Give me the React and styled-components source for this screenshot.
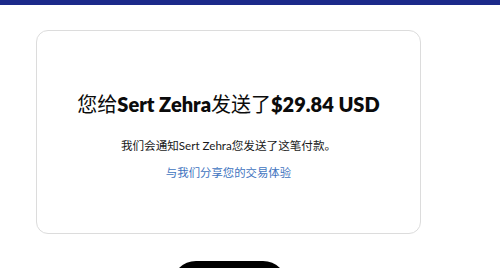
import React from 'react'
import styled, { createGlobalStyle } from 'styled-components'

const Global = createGlobalStyle`
  body {
    margin: 0;
    background: #ffffff;
    font-family: Lato, "Noto Sans CJK SC", sans-serif;
    color: #111;
  }
`

const TopBar = styled.div`
  height: 5px;
  background-color: #1c2a8a;
`

const Page = styled.main`
  padding: 25px 0 0 36px;
  display: flex;
  flex-direction: column;
  align-items: flex-start;
`

const Card = styled.section`
  box-sizing: border-box;
  width: 385px;
  height: 204px;
  border: 1px solid #dcdcdc;
  border-radius: 12px;
  padding-top: 60px;
  display: flex;
  flex-direction: column;
  align-items: center;
`

const Title = styled.h1`
  margin: 0;
  font-size: 20px;
  line-height: 26px;
  font-weight: 400;
  color: #0b0b0b;

  & > b {
    font-weight: 800;
  }
`

const Note = styled.p`
  margin: 21px 0 0;
  font-size: 11.6px;
  line-height: 15px;
  color: #1a1a1a;
`

const Link = styled.a`
  margin-top: 12px;
  font-size: 11.4px;
  line-height: 15px;
  color: #3f74c0;
  text-decoration: none;
  cursor: pointer;
`

const Button = styled.button`
  margin: 27px 0 0 136px;
  width: 115px;
  height: 62px;
  border: none;
  border-radius: 24px;
  background-color: #000;
  color: #fff;
  font-family: inherit;
  font-size: 15px;
  font-weight: 700;
`

export default function App() {
  return (
    <>
      <Global />
      <TopBar />
      <Page>
        <Card>
          <Title>
            您给<b>Sert Zehra</b>发送了<b>$29.84 USD</b>
          </Title>
          <Note>我们会通知Sert Zehra您发送了这笔付款。</Note>
          <Link>与我们分享您的交易体验</Link>
        </Card>
        <Button />
      </Page>
    </>
  )
}
